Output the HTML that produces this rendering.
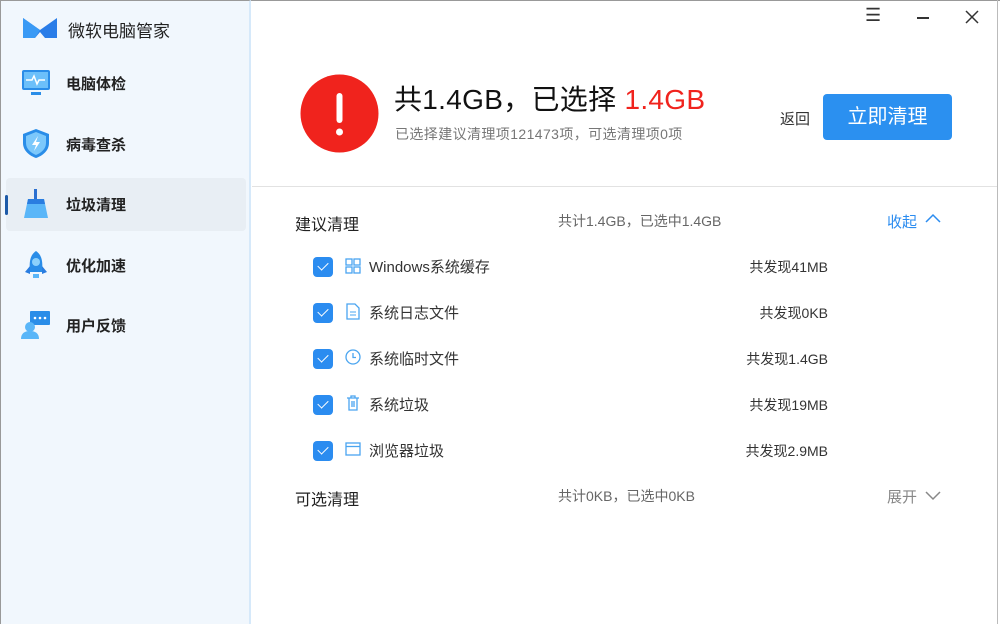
<!DOCTYPE html>
<html><head><meta charset="utf-8"><style>
*{margin:0;padding:0;box-sizing:border-box}
body{width:1000px;height:624px;overflow:hidden;background:#fff;font-family:"Liberation Sans","Noto Sans CJK SC",sans-serif;position:relative;color:#222}
.a{position:absolute;white-space:nowrap}
#side{position:absolute;left:0;top:0;width:251px;height:624px;background:#f1f7fd;border-right:2px solid #d6e9fa;border-left:1px solid #999;border-top:1px solid #999}
.nav{font-size:15px;font-weight:bold;color:#222}
.row{font-size:15px;color:#333}
.cb{position:absolute;width:20px;height:20px;border-radius:4px;background:#2b8cf0}
.cb:after{content:"";position:absolute;left:7px;top:3px;width:5px;height:9px;border:solid #fff;border-width:0 1.6px 1.6px 0;transform:rotate(45deg)}
.sz{font-size:14px;color:#333;right:172px}
</style></head><body>
<div style="position:absolute;left:0;top:0;width:1000px;height:1px;background:#999"></div>
<div style="position:absolute;right:2px;top:0;width:1px;height:624px;background:#bbb"></div>
<div id="side"></div>
<svg class="a" style="left:23px;top:18px" width="34" height="22" viewBox="0 0 34 22"><path d="M0 0L17 12L34 0V20L22 20L17 14L12 20H0Z" fill="#2a7de8"/><path d="M0 0L17 12L12 20H0Z" fill="#3a9af5"/></svg>
<div class="a" style="left:68px;top:17px;font-size:17px;color:#222">微软电脑管家</div>

<svg class="a" style="left:21px;top:69px" width="30" height="28" viewBox="0 0 30 28"><rect x="1" y="1" width="28" height="20" rx="2" fill="#2a8de8"/><rect x="3" y="3" width="24" height="16" fill="#6cc0fa"/><path d="M5 11h6l2-4 3 8 2-4h6" stroke="#fff" fill="none" stroke-width="1.5"/><rect x="10" y="23" width="10" height="3" fill="#2a8de8"/></svg>
<div class="a nav" style="left:66px;top:73px">电脑体检</div>
<svg class="a" style="left:22px;top:128px" width="28" height="31" viewBox="0 0 28 31"><path d="M14 1L27 6V15C27 23 20 28 14 30C8 28 1 23 1 15V6Z" fill="#2a8de8"/><path d="M14 4L24 8V15C24 21 19 25 14 27C9 25 4 21 4 15V8Z" fill="#7cc8fb"/><path d="M16 8L10 17H14L12 23L18 14H14Z" fill="#fff"/></svg>
<div class="a nav" style="left:66px;top:134px">病毒查杀</div>
<div style="position:absolute;left:6px;top:178px;width:240px;height:53px;background:#e8eef4;border-radius:4px"></div>
<div style="position:absolute;left:5px;top:195px;width:3px;height:20px;background:#1d5aa8;border-radius:2px"></div>
<svg class="a" style="left:22px;top:189px" width="28" height="30" viewBox="0 0 28 30"><rect x="12" y="0" width="3" height="10" fill="#2a6fd0"/><path d="M6 10H22L26 29H2Z" fill="#5ab6f8"/><path d="M6 10H22L23 15H5Z" fill="#2a7de0"/></svg>
<div class="a nav" style="left:66px;top:194px">垃圾清理</div>
<svg class="a" style="left:24px;top:250px" width="24" height="30" viewBox="0 0 24 30"><path d="M12 1C18 5 19 12 18 22H6C5 12 6 5 12 1Z" fill="#2a8de8"/><circle cx="12" cy="12" r="4" fill="#8cd0fb"/><path d="M6 16L1 22L6 24ZM18 16L23 22L18 24Z" fill="#2a7de0"/><rect x="9" y="24" width="6" height="4" fill="#5ab6f8"/></svg>
<div class="a nav" style="left:66px;top:255px">优化加速</div>
<svg class="a" style="left:21px;top:310px" width="30" height="30" viewBox="0 0 30 30"><rect x="9" y="1" width="20" height="14" rx="1" fill="#2a8de8"/><circle cx="14" cy="8" r="1.3" fill="#fff"/><circle cx="19" cy="8" r="1.3" fill="#fff"/><circle cx="24" cy="8" r="1.3" fill="#fff"/><circle cx="9" cy="17" r="5" fill="#5ab6f8"/><path d="M0 29C0 23 4 21 9 21C14 21 18 23 18 29Z" fill="#5ab6f8"/></svg>
<div class="a nav" style="left:66px;top:315px">用户反馈</div>

<div class="a" style="left:865px;top:5px;font-size:18px;color:#333">☰</div>
<div style="position:absolute;left:917px;top:17px;width:12px;height:1.5px;background:#333"></div>
<svg class="a" style="left:965px;top:10px" width="14" height="14"><path d="M1 1L13 13M13 1L1 13" stroke="#333" stroke-width="1.5"/></svg>

<svg class="a" style="left:300px;top:74px" width="79" height="79"><circle cx="39.5" cy="39.5" r="39" fill="#f0231d"/><rect x="36.5" y="19" width="6" height="30" rx="3" fill="#fff"/><circle cx="39.5" cy="58" r="3.5" fill="#fff"/></svg>
<div class="a" style="left:394px;top:78px;font-size:28px;color:#111;letter-spacing:0.3px">共1.4GB，已选择 <span style="color:#f0231d">1.4GB</span></div>
<div class="a" style="left:395px;top:124px;font-size:14px;color:#777;letter-spacing:0.4px">已选择建议清理项121473项，可选清理项0项</div>
<div class="a" style="left:780px;top:108px;font-size:15px;color:#333">返回</div>
<div style="position:absolute;left:823px;top:94px;width:129px;height:46px;background:#2b90f0;border-radius:4px;color:#fff;font-size:20px;text-align:center;line-height:46px">立即清理</div>
<div style="position:absolute;left:252px;top:186px;width:745px;height:1px;background:#e2e2e2"></div>

<div class="a" style="left:295px;top:211px;font-size:16px;color:#222">建议清理</div>
<div class="a" style="left:558px;top:211px;font-size:14px;color:#666">共计1.4GB，已选中1.4GB</div>
<div class="a" style="left:887px;top:211px;font-size:15px;color:#2b8cf0">收起</div>
<svg class="a" style="left:925px;top:213px" width="16" height="12"><path d="M1 9L8 2L15 9" stroke="#2b8cf0" fill="none" stroke-width="1.5"/></svg>

<div class="cb" style="left:313px;top:257px"></div>
<svg class="a" style="left:345px;top:258px" width="16" height="16"><g fill="none" stroke="#4aa5f0" stroke-width="1.3"><rect x="1" y="1" width="6" height="6"/><rect x="9" y="1" width="6" height="6"/><rect x="1" y="9" width="6" height="6"/><rect x="9" y="9" width="6" height="6"/></g></svg>
<div class="a row" style="left:369px;top:256px">Windows系统缓存</div>
<div class="a sz" style="top:257px">共发现41MB</div>

<div class="cb" style="left:313px;top:303px"></div>
<svg class="a" style="left:346px;top:303px" width="14" height="17"><path d="M1 1H9L13 5V16H1Z" fill="none" stroke="#4aa5f0" stroke-width="1.3"/><path d="M4 9H10M4 12H10" stroke="#4aa5f0"/></svg>
<div class="a row" style="left:369px;top:302px">系统日志文件</div>
<div class="a sz" style="top:303px">共发现0KB</div>

<div class="cb" style="left:313px;top:349px"></div>
<svg class="a" style="left:345px;top:349px" width="16" height="16"><circle cx="8" cy="8" r="7" fill="none" stroke="#4aa5f0" stroke-width="1.3"/><path d="M8 4V8.5H11" fill="none" stroke="#4aa5f0" stroke-width="1.3"/></svg>
<div class="a row" style="left:369px;top:348px">系统临时文件</div>
<div class="a sz" style="top:349px">共发现1.4GB</div>

<div class="cb" style="left:313px;top:395px"></div>
<svg class="a" style="left:346px;top:395px" width="14" height="16"><path d="M1 3H13M5 3V1H9V3M3 3V15H11V3M6 6V12M8 6V12" fill="none" stroke="#4aa5f0" stroke-width="1.3"/></svg>
<div class="a row" style="left:369px;top:394px">系统垃圾</div>
<div class="a sz" style="top:395px">共发现19MB</div>

<div class="cb" style="left:313px;top:441px"></div>
<svg class="a" style="left:345px;top:442px" width="16" height="14"><rect x="1" y="1" width="14" height="12" fill="none" stroke="#4aa5f0" stroke-width="1.3"/><path d="M1 4.5H15" stroke="#4aa5f0" stroke-width="1.3"/></svg>
<div class="a row" style="left:369px;top:440px">浏览器垃圾</div>
<div class="a sz" style="top:441px">共发现2.9MB</div>

<div class="a" style="left:295px;top:486px;font-size:16px;color:#222">可选清理</div>
<div class="a" style="left:558px;top:486px;font-size:14px;color:#666">共计0KB，已选中0KB</div>
<div class="a" style="left:887px;top:486px;font-size:15px;color:#888">展开</div>
<svg class="a" style="left:925px;top:489px" width="16" height="12"><path d="M1 3L8 10L15 3" stroke="#888" fill="none" stroke-width="1.5"/></svg>
</body></html>
